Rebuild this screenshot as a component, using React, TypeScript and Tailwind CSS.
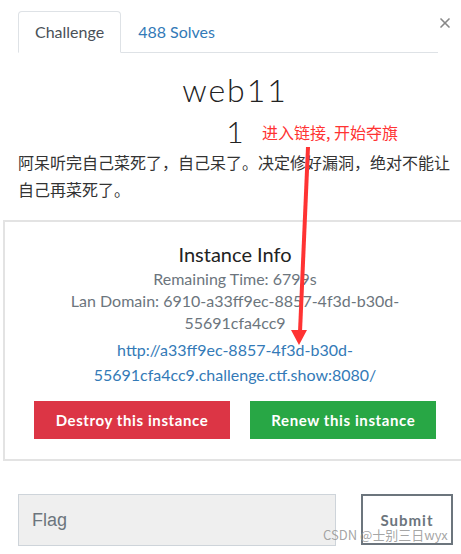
import { X } from 'lucide-react';

const lato = { fontFamily: 'Lato, "Noto Sans CJK SC", sans-serif' };

export default function App() {
  return (
    <div
      className="relative w-[461px] h-[554px] overflow-hidden bg-white text-[#212529] font-['Lato','Noto_Sans_CJK_SC',sans-serif]"
    >
      {/* tabs */}
      <div className="pt-[11px] ml-[18px] w-[420px]">
        <div className="flex border-b border-[#dee2e6]">
          <div className="-mb-px h-[42px] px-[16px] flex items-center border border-[#dee2e6] border-b-white rounded-t-[4px] text-[16px] text-[#495057]">
            Challenge
          </div>
          <div className="h-[41px] px-[17px] flex items-center text-[16px] text-[#337ab7]">488 Solves</div>
        </div>
      </div>
      <button className="absolute left-[437px] top-[15px] text-[#888]">
        <X className="w-[16px] h-[16px]" strokeWidth={2.5} />
      </button>

      {/* title */}
      <div className="ml-[18px] w-[434px] flex flex-col items-center">
        <h1 className="mt-[18px] text-[32px] leading-[38px] font-light tracking-[2px] text-[#222]">web11</h1>
        <div className="mt-[4px] text-[30px] leading-[36px] font-light text-[#222]">1</div>
      </div>
      <p className="ml-[18px] w-[436px] text-[16px] leading-[27px] text-[#333]" style={lato}>
        阿呆听完自己菜死了，自己呆了。决定修好漏洞，绝对不能让自己再菜死了。
      </p>

      {/* instance box */}
      <div className="ml-[3px] mt-[17px] w-[464px] border-2 border-[#e3e3e3] flex flex-col items-center pt-[18px] pb-[20px]">
        <div className="text-[20px] leading-[28px] text-[#222]">Instance Info</div>
        <div className="text-[16px] leading-[22px] text-[#6c757d] text-center w-[360px]">
          Remaining Time: 6799s
          <br />
          Lan Domain: 6910-a33ff9ec-8857-4f3d-b30d-55691cfa4cc9
        </div>
        <a className="mt-[3px] text-[16px] leading-[25px] text-[#337ab7] text-center w-[300px] break-all">
          http://a33ff9ec-8857-4f3d-b30d-
          <br />
          55691cfa4cc9.challenge.ctf.show:8080/
        </a>
        <div className="mt-[14px] flex gap-[20px]">
          <button className="h-[38px] px-[22px] bg-[#dc3545] text-white text-[15px] font-bold tracking-[0.6px]">
            Destroy this instance
          </button>
          <button className="h-[38px] px-[21px] bg-[#28a745] text-white text-[15px] font-bold tracking-[0.6px]">
            Renew this instance
          </button>
        </div>
      </div>

      {/* flag form */}
      <div className="ml-[18px] mt-[33px] flex items-start gap-[25px]">
        <div className="w-[318px] h-[52px] bg-[#efefef] border border-[#ced4da] flex items-center pl-[13px] text-[18px] text-[#6c757d] font-['Liberation_Sans',Arial,sans-serif]">
          Flag
        </div>
        <button className="w-[92px] h-[51px] border-2 border-[#6c757d] text-[#6c757d] text-[15px] font-bold tracking-[1px] pt-[1px]">
          Submit
        </button>
      </div>

      {/* screenshot annotations */}
      <div className="absolute left-[262px] top-[122px] text-[16px] leading-[20px] text-[#ff3333] font-['Noto_Sans_CJK_SC',sans-serif]">
        进入链接, 开始夺旗
      </div>
      <svg className="absolute left-0 top-0 pointer-events-none" width="461" height="554">
        <line x1="308" y1="147" x2="300" y2="332" stroke="#ff3333" strokeWidth="4" />
        <polygon points="291,330 307,330 299,345" fill="#ff3333" />
      </svg>
      <div className="absolute left-[323px] top-[526px] text-[13px] leading-[18px] text-[#9a9a9a]/90 font-['Noto_Sans_CJK_SC',sans-serif]">
        CSDN @士别三日wyx
      </div>
    </div>
  );
}
